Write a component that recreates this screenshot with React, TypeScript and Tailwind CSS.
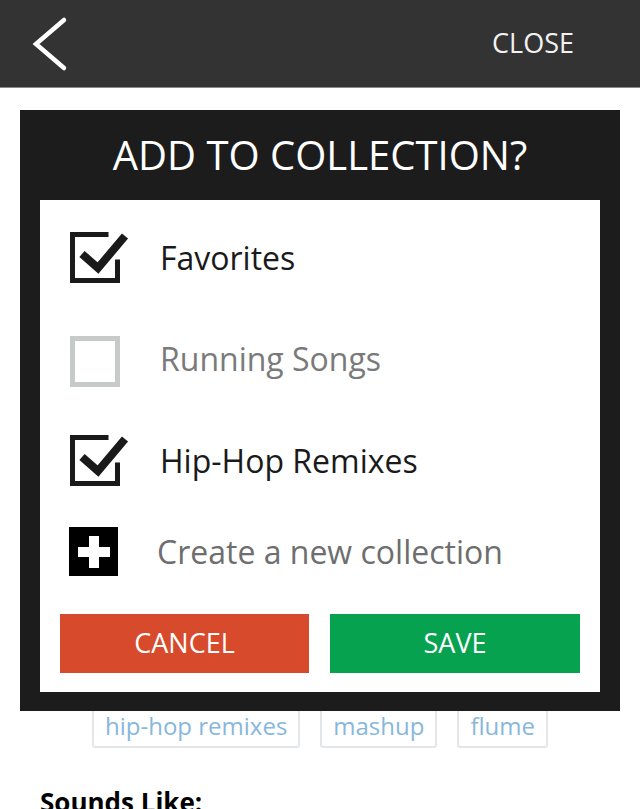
import React from "react";

const font = { fontFamily: '"Open Sans", "Liberation Sans", sans-serif' };

function Checked() {
  return (
    <svg width="62" height="60" viewBox="0 0 62 60" className="shrink-0">
      <path d="M38 8.5 H4.5 V54.5 H49.5 V36" fill="none" stroke="#1a1a1a" strokeWidth="5" strokeLinecap="square" />
      <path d="M14 28 L30 42 L57 10" fill="none" stroke="#1a1a1a" strokeWidth="8" strokeLinejoin="miter" />
    </svg>
  );
}

function Unchecked() {
  return (
    <div className="w-[62px] h-[60px] shrink-0 flex items-end">
      <div className="ml-[2px] w-[50px] h-[51px] border-[5px] border-[#c6cac9]" />
    </div>
  );
}

function Plus() {
  return (
    <div className="w-[62px] h-[49px] shrink-0 flex">
      <div className="ml-[1px] w-[49px] h-[49px] bg-black relative flex items-center justify-center">
        <div className="absolute w-[32px] h-[10px] bg-white" />
        <div className="absolute w-[10px] h-[32px] bg-white" />
      </div>
    </div>
  );
}

export default function App() {
  return (
    <div className="relative w-[640px] h-[809px] overflow-hidden bg-white" style={font}>
      <div className="h-[88px] bg-[#333333] border-b border-[#8a8a8a] flex items-center justify-between pl-[30px] pr-[66px]">
        <svg width="40" height="56" viewBox="0 0 40 56">
          <path d="M34 4 L6 28 L34 52" fill="none" stroke="#ffffff" strokeWidth="4.5" strokeLinecap="round" strokeLinejoin="miter" />
        </svg>
        <span className="text-[27px] text-[#f2f2f2] leading-none mt-[-2px]">CLOSE</span>
      </div>

      <div className="flex flex-col">
        <div className="h-[612px]" />
        <div className="flex justify-center gap-[20px]">
          <div className="h-[48px] px-[11px] pt-[3px] flex items-center border-2 border-[#e3e6e8] rounded-[3px] text-[24px] text-[#88b7dc]">hip-hop remixes</div>
          <div className="h-[48px] px-[11px] pt-[3px] flex items-center border-2 border-[#e3e6e8] rounded-[3px] text-[24px] text-[#88b7dc]">mashup</div>
          <div className="h-[48px] px-[11px] pt-[3px] flex items-center border-2 border-[#e3e6e8] rounded-[3px] text-[24px] text-[#88b7dc]">flume</div>
        </div>
        <div className="mt-[41px] pl-[40px] text-[26px] font-bold text-black leading-none">Sounds Like:</div>
      </div>

      <div className="absolute left-[20px] top-[110px] w-[600px] h-[601px] bg-[#1c1c1c] flex flex-col px-[20px] pb-[19px]">
        <div className="h-[90px] flex items-center justify-center text-[40px] text-white leading-none">ADD TO COLLECTION?</div>
        <div className="flex-1 bg-white flex flex-col px-[20px]">
          <div className="mt-[26px] ml-[8px] flex items-center gap-[30px]">
            <Checked />
            <span className="text-[32px] text-[#1a1a1a] leading-none mt-[3px]">Favorites</span>
          </div>
          <div className="mt-[41px] ml-[8px] flex items-center gap-[30px]">
            <Unchecked />
            <span className="text-[32px] text-[#7a7a7a] leading-none mt-[3px]">Running Songs</span>
          </div>
          <div className="mt-[42px] ml-[8px] flex items-center gap-[30px]">
            <Checked />
            <span className="text-[32px] text-[#1a1a1a] leading-none mt-[3px]">Hip-Hop Remixes</span>
          </div>
          <div className="mt-[38px] ml-[8px] flex items-center gap-[27px]">
            <Plus />
            <span className="text-[32px] text-[#6e6e6e] leading-none">Create a new collection</span>
          </div>
          <div className="mt-[38px] flex gap-[21px]">
            <div className="w-[249px] h-[59px] bg-[#d84a2c] flex items-center justify-center text-[27px] text-white">CANCEL</div>
            <div className="w-[250px] h-[59px] bg-[#06a24f] flex items-center justify-center text-[27px] text-white">SAVE</div>
          </div>
        </div>
      </div>
    </div>
  );
}
